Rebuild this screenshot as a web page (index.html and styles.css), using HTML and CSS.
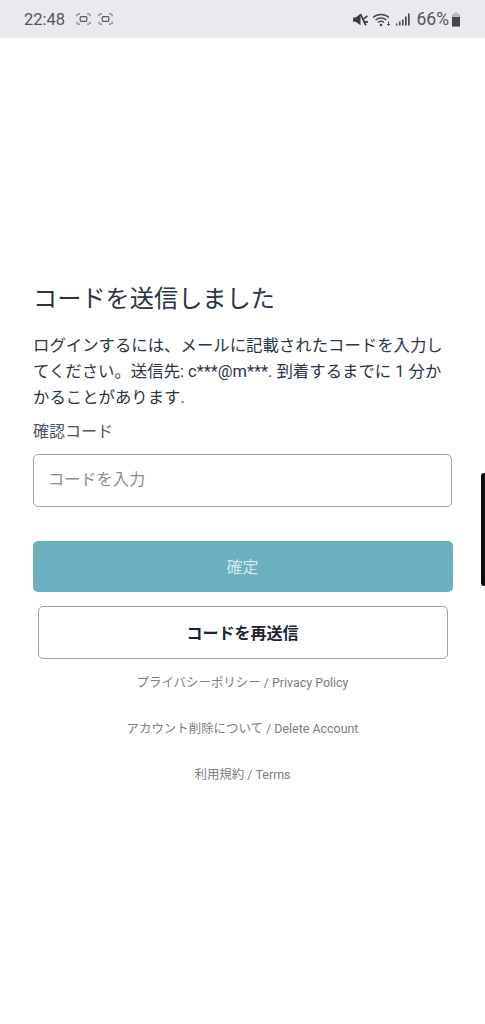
FILE: index.html
```html
<!DOCTYPE html>
<html lang="ja">
<head>
<meta charset="utf-8">
<title>コードを送信しました</title>
<link rel="stylesheet" href="styles.css">
</head>
<body>
<header class="status">
  <div class="status-left">
    <span class="time">22:48</span>
    <svg class="shot" viewBox="0 0 16 14" width="15" height="14"><path d="M1 4V1.5h3M12 1.5h3V4M15 10v2.5h-3M4 12.5H1V10" fill="none" stroke="#6a6a70" stroke-width="1.2" stroke-dasharray="2.4 1.2"/><rect x="4.5" y="4.5" width="7" height="5" rx="1.2" fill="none" stroke="#56565c" stroke-width="1.3"/></svg>
    <svg class="shot" viewBox="0 0 16 14" width="15" height="14"><path d="M1 4V1.5h3M12 1.5h3V4M15 10v2.5h-3M4 12.5H1V10" fill="none" stroke="#6a6a70" stroke-width="1.2" stroke-dasharray="2.4 1.2"/><rect x="4.5" y="4.5" width="7" height="5" rx="1.2" fill="none" stroke="#56565c" stroke-width="1.3"/></svg>
  </div>
  <div class="status-right">
    <svg viewBox="0 0 16 14" width="17" height="15"><path d="M1 5h2.5L8 1.5v11L3.5 9H1z" fill="#3c3c42"/><path d="M8 2l5 10.5" stroke="#3c3c42" stroke-width="1.6"/><path d="M11 6.5l3.5-3M11.5 9l3.5 .5" stroke="#3c3c42" stroke-width="1.5"/></svg>
    <svg viewBox="0 0 20 15" width="20" height="15"><path d="M1 5.5a12 12 0 0 1 16 0M3.5 8a8.4 8.4 0 0 1 11 0M6 10.5a4.6 4.6 0 0 1 6 0" fill="none" stroke="#4a4a50" stroke-width="1.4"/><circle cx="9" cy="13" r="1.3" fill="#4a4a50"/><path d="M16.5 9.5v4M15 12l1.5 1.5L18 12" fill="none" stroke="#4a4a50" stroke-width="1"/></svg>
    <svg viewBox="0 0 15 14" width="15" height="15"><path d="M1 11h1.5v2H1zM4 9h1.6v4H4zM7 7h1.6v6H7zM10 4h1.7v9H10zM13 1h1.7v12H13z" fill="#4a4a50"/></svg>
    <span class="pct">66%</span>
    <svg viewBox="0 0 10 15" width="10" height="15"><path d="M3 .5h4v1.5h2v12.5H1V2h2z" fill="#b9b9bd"/><path d="M1 5h8v9.5H1z" fill="#47474b"/></svg>
  </div>
</header>

<main class="page">
  <h1 class="title">コードを送信しました</h1>
  <p class="desc">ログインするには、メールに記載されたコードを入力してください。送信先: c***@m***. 到着するまでに 1 分かかることがあります.</p>
  <label class="label" for="code">確認コード</label>
  <input class="input" id="code" type="text" placeholder="コードを入力">
  <button class="btn-primary" type="button">確定</button>
  <button class="btn-secondary" type="button">コードを再送信</button>
  <nav class="links">
    <a href="#">プライバシーポリシー / Privacy Policy</a>
    <a href="#">アカウント削除について / Delete Account</a>
    <a href="#">利用規約 / Terms</a>
  </nav>
</main>
<div class="edge-handle"></div>
</body>
</html>
```
FILE: styles.css
```css
* { box-sizing: border-box; }
html, body { margin: 0; height: 1024px; overflow: hidden; background: #fff; }
body { font-family: Roboto, "Noto Sans CJK JP", sans-serif; position: relative; }

.status {
  height: 38px;
  background: #e9e9ef;
  display: flex;
  align-items: center;
  justify-content: space-between;
  padding: 0 24px 0 24px;
  color: #55555b;
}
.status-left, .status-right { display: flex; align-items: center; }
.status-left { gap: 7px; }
.time { font-size: 16.5px; margin-right: 4px; }
.status-right { gap: 3px; }
.pct { font-size: 17.5px; margin-left: 4px; margin-right: -1px; }

.page { display: flex; flex-direction: column; padding: 244px 33px 0; }
.title {
  margin: 0;
  font-size: 24.2px;
  line-height: 34px;
  font-weight: 400;
  color: #2a3543;
}
.desc {
  margin: 17px 0 0;
  font-size: 16.4px;
  line-height: 26px;
  color: #2a3543;
}
.label {
  margin-top: 9px;
  font-size: 16px;
  line-height: 24px;
  color: #4a5563;
}
.input {
  margin-top: 10px;
  width: 419px;
  height: 53px;
  padding: 0 14px 2px;
  border: 1px solid #97a3aa;
  border-radius: 5px;
  font: inherit;
  font-size: 16.2px;
  background: #fff;
}
.input::placeholder { color: #838f96; opacity: 1; }
.btn-primary {
  margin: 34px 0 0 -0.5px;
  width: 420px;
  height: 51px;
  padding: 0 0 2px;
  border: 0;
  border-radius: 5px;
  background: #6ab0bf;
  color: #d3e7ec;
  font: inherit;
  font-size: 16px;
}
.btn-secondary {
  margin: 14px 0 0 4.5px;
  width: 410px;
  height: 53px;
  padding: 0 0 2px;
  border: 1px solid #9aa0a8;
  border-radius: 5px;
  background: #fff;
  color: #1b2633;
  font: inherit;
  font-size: 16px;
  font-weight: 700;
}
.links {
  margin-top: 14px;
  width: 419px;
  display: flex;
  flex-direction: column;
  align-items: center;
  gap: 26px;
}
.links a {
  font-size: 12.45px;
  line-height: 20px;
  color: #7c7c7c;
  text-decoration: none;
}
.edge-handle {
  position: absolute;
  right: 0;
  top: 473px;
  width: 4px;
  height: 113px;
  background: #0c0c0c;
  border-radius: 3px 0 0 3px;
}
```
